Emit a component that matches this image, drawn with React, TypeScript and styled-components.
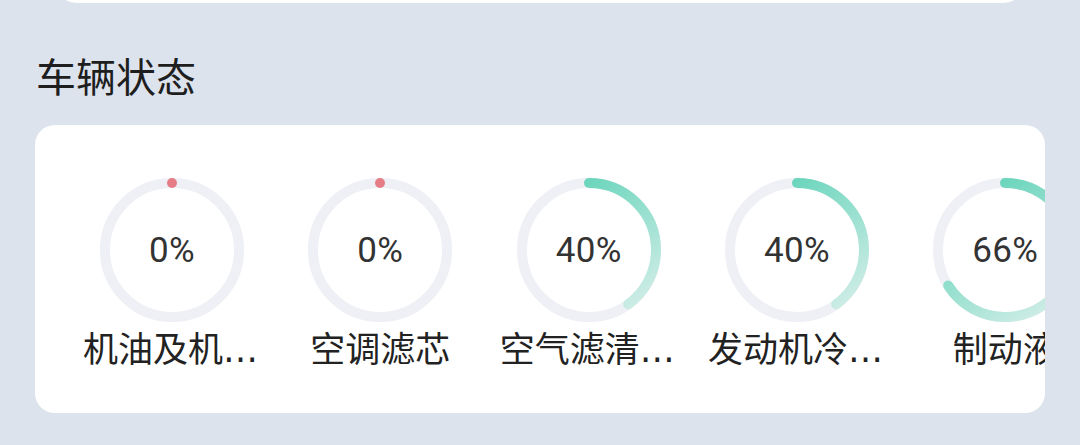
import React from "react";
import styled, { createGlobalStyle } from "styled-components";

const Global = createGlobalStyle`
  html, body {
    margin: 0;
    padding: 0;
    background: #dde3ed;
  }
  body {
    font-family: "Roboto", "Noto Sans CJK SC", sans-serif;
    color: #222;
  }
`;

const Page = styled.div`
  width: 1080px;
  height: 445px;
  overflow: hidden;
  padding: 0 35px;
  box-sizing: border-box;
  display: flex;
  flex-direction: column;
`;

const PrevCard = styled.div`
  margin: -97px 20px 0 20px;
  height: 100px;
  flex-shrink: 0;
  background: #ffffff;
  border-radius: 0 0 22px 22px;
`;

const Title = styled.h2`
  margin: 43px 0 0 1px;
  font-family: "Noto Sans CJK SC", sans-serif;
  font-weight: 400;
  font-size: 40px;
  line-height: 58px;
  color: #1e1e1e;
`;

const Card = styled.section`
  margin-top: 21px;
  height: 288px;
  flex-shrink: 0;
  background: #ffffff;
  border-radius: 20px;
  overflow: hidden;
  display: flex;
  gap: 28.33px;
  padding: 53px 0 0 47px;
  box-sizing: border-box;
`;

const Item = styled.div`
  width: 180px;
  flex-shrink: 0;
  display: flex;
  flex-direction: column;
  align-items: center;
`;

const RingBox = styled.div`
  width: 144px;
  height: 144px;
  display: grid;
  place-items: center;
  & > * {
    grid-area: 1 / 1;
  }
`;

const Percent = styled.span`
  font-family: "Roboto", sans-serif;
  font-size: 35px;
  font-weight: 400;
  color: #333;
  letter-spacing: 0.3px;
`;

const Label = styled.div`
  margin-top: 6px;
  width: 178px;
  font-family: "DejaVu Sans", "Noto Sans CJK SC", sans-serif;
  font-size: 35px;
  line-height: 45px;
  color: #222;
  text-align: center;
  white-space: nowrap;
  overflow: hidden;
  text-overflow: ellipsis;
`;

type RingProps = { value: number; id: string };

const R = 67;
const C = 2 * Math.PI * R;

const Ring: React.FC<RingProps> = ({ value, id }) => {
  const len = (C * value) / 100;
  return (
    <RingBox>
      <svg width="144" height="144" viewBox="0 0 144 144">
        <defs>
          <linearGradient
            id={id}
            gradientUnits="userSpaceOnUse"
            x1="144"
            y1="20"
            x2="0"
            y2="124"
          >
            <stop offset="0" stopColor="#55d0b3" />
            <stop offset="1" stopColor="#d8efea" />
          </linearGradient>
        </defs>
        <circle cx="72" cy="72" r={R} fill="none" stroke="#eef0f5" strokeWidth="10" />
        {value === 0 ? (
          <circle cx="72" cy="5" r="5" fill="#e67d86" />
        ) : (
          <circle
            cx="72"
            cy="72"
            r={R}
            fill="none"
            stroke={`url(#${id})`}
            strokeWidth="10"
            strokeLinecap="round"
            strokeDasharray={`${len} ${C}`}
            transform="rotate(-90 72 72)"
          />
        )}
      </svg>
      <Percent>{value}%</Percent>
    </RingBox>
  );
};

const items = [
  { name: "机油及机油滤清器", value: 0 },
  { name: "空调滤芯", value: 0 },
  { name: "空气滤清器滤芯", value: 40 },
  { name: "发动机冷却液", value: 40 },
  { name: "制动液", value: 66 },
];

export default function App() {
  return (
    <>
      <Global />
      <Page>
        <PrevCard />
        <Title>车辆状态</Title>
        <Card>
          {items.map((it, i) => (
            <Item key={i}>
              <Ring value={it.value} id={`g${i}`} />
              <Label>{it.name}</Label>
            </Item>
          ))}
        </Card>
      </Page>
    </>
  );
}
